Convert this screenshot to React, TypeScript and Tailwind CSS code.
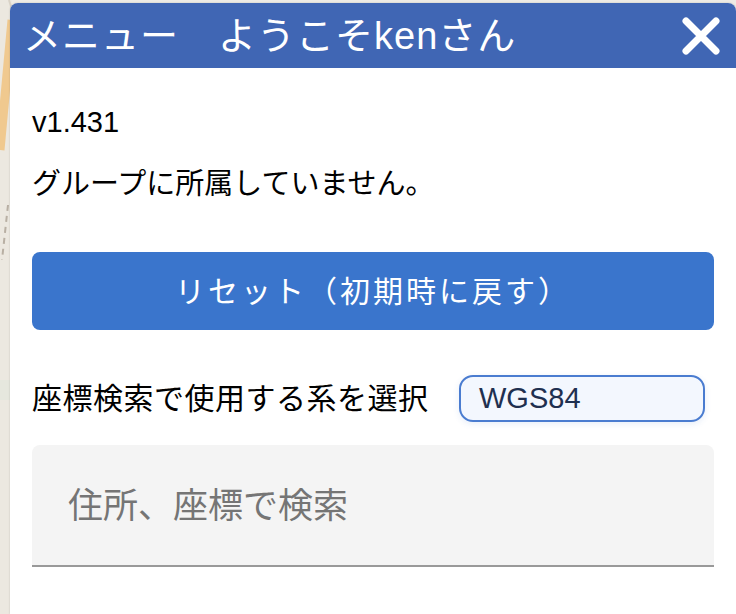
import React from 'react';

const jp = { fontFamily: '"Liberation Sans", "Noto Sans CJK JP", sans-serif' };

const App: React.FC = () => {
  return (
    <div className="relative w-[736px] h-[614px] overflow-hidden bg-[#eeebe5]" style={jp}>
      {/* map peeking out on the left */}
      <svg className="absolute left-0 top-0" width="12" height="614" viewBox="0 0 12 614">
        <rect x="0" y="0" width="12" height="614" fill="#ece8e0" />
        <path d="M12 20 L0 150" stroke="#f0c98f" strokeWidth="9" fill="none" />
        <path d="M9 0 L12 10" stroke="#d9d2c6" strokeWidth="2" fill="none" />
        <path d="M8 205 L2 260" stroke="#b8afa3" strokeWidth="2" strokeDasharray="6 5" fill="none" />
        <rect x="0" y="380" width="12" height="20" fill="#e6e7de" />
      </svg>

      <div className="relative ml-[10px] mt-[3px] h-[611px] bg-white rounded-t-[8px] overflow-hidden shadow-[0_0_2px_rgba(0,0,0,0.2)]">
        <div className="h-[65px] bg-[#4066b4] flex items-center justify-between pl-[13px] pr-[14px]">
          <h1 className="text-white text-[38px] leading-none tracking-[1px]">メニュー　ようこそkenさん</h1>
          <button className="w-[42px] h-[42px] flex items-center justify-center">
            <svg width="40" height="40" viewBox="0 0 40 40">
              <path d="M5 5 L35 35 M35 5 L5 35" stroke="white" strokeWidth="7" strokeLinecap="round" />
            </svg>
          </button>
        </div>

        <div className="px-[22px] pt-[40px]">
          <p className="text-[29px] leading-none text-black">v1.431</p>
          <p className="mt-[33px] text-[29px] leading-none text-black">グループに所属していません。</p>

          <button className="mt-[53px] w-full h-[78px] rounded-[8px] bg-[#3a75cc] text-white text-[30px] tracking-[3px] flex items-center justify-center">
            リセット（初期時に戻す）
          </button>

          <div className="mt-[45px] h-[47px] flex items-center justify-between pr-[9px]">
            <span className="text-[30px] leading-none tracking-[0.5px] text-black">座標検索で使用する系を選択</span>
            <div className="w-[246px] h-[47px] rounded-[14px] border-2 border-[#4a7cd0] bg-[#f3f7fe] flex items-center pl-[18px] shadow-[0_2px_6px_rgba(58,117,204,0.12)]">
              <span className="text-[29px] leading-none text-[#1f3050]">WGS84</span>
            </div>
          </div>

          <div className="mt-[23px] h-[122px] rounded-t-[8px] bg-[#f4f4f4] border-b-2 border-[#999999] flex items-center pl-[36px]">
            <span className="text-[35px] leading-none text-[#757575]">住所、座標で検索</span>
          </div>
        </div>
      </div>
    </div>
  );
};

export default App;
